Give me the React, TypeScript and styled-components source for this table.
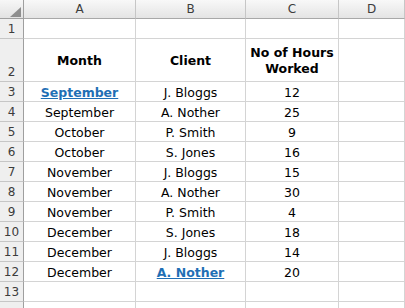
import React from "react";
import styled, { createGlobalStyle } from "styled-components";

const rows = [
	{ month: "September", client: "J. Bloggs", hours: "12", monthLink: true },
	{ month: "September", client: "A. Nother", hours: "25" },
	{ month: "October", client: "P. Smith", hours: "9" },
	{ month: "October", client: "S. Jones", hours: "16" },
	{ month: "November", client: "J. Bloggs", hours: "15" },
	{ month: "November", client: "A. Nother", hours: "30" },
	{ month: "November", client: "P. Smith", hours: "4" },
	{ month: "December", client: "S. Jones", hours: "18" },
	{ month: "December", client: "J. Bloggs", hours: "14" },
	{ month: "December", client: "A. Nother", hours: "20", clientLink: true },
];

const App = () => {
	return (
		<>
			<GlobalStyle />
			<Sheet>
				<Corner>
					<Triangle />
				</Corner>
				{["A", "B", "C", "D"].map((c) => (
					<ColHead key={c}>{c}</ColHead>
				))}

				<RowHead ht={20}>1</RowHead>
				<Cell ht={20} />
				<Cell ht={20} />
				<Cell ht={20} />
				<Cell ht={20} />

				<RowHead ht={43}>2</RowHead>
				<Cell ht={43}>
					<Bold>Month</Bold>
				</Cell>
				<Cell ht={43}>
					<Bold>Client</Bold>
				</Cell>
				<Cell ht={43}>
					<Bold>
						No of Hours
						<br />
						Worked
					</Bold>
				</Cell>
				<Cell ht={43} />

				{rows.map((r, i) => (
					<React.Fragment key={i}>
						<RowHead ht={20}>{i + 3}</RowHead>
						<Cell ht={20}>{r.monthLink ? <Link>{r.month}</Link> : r.month}</Cell>
						<Cell ht={20}>{r.clientLink ? <Link>{r.client}</Link> : r.client}</Cell>
						<Cell ht={20}>{r.hours}</Cell>
						<Cell ht={20} />
					</React.Fragment>
				))}

				<RowHead ht={20}>13</RowHead>
				<Cell ht={20} />
				<Cell ht={20} />
				<Cell ht={20} />
				<Cell ht={20} />

				{/* row 14 only peeks in at the bottom edge */}
				<RowHead ht={20} />
				<Cell ht={20} />
				<Cell ht={20} />
				<Cell ht={20} />
				<Cell ht={20} />
			</Sheet>
		</>
	);
};

export default App;

const GlobalStyle = createGlobalStyle`
	body {
		margin: 0;
		overflow: hidden;
		background: #ffffff;
		font-family: "DejaVu Sans", Verdana, sans-serif;
	}
`;

const Sheet = styled.div`
	display: grid;
	grid-template-columns: 24px 112px 110px 93px 1fr;
	width: 405px;
	height: 308px;
	overflow: hidden;
`;

const Corner = styled.div`
	height: 19px;
	position: relative;
	background: linear-gradient(#f7f7f7, #e2e2e2);
	border-right: 1px solid #9f9f9f;
	border-bottom: 1px solid #9f9f9f;
	box-sizing: border-box;
`;

const Triangle = styled.div`
	position: absolute;
	right: 2px;
	bottom: 1px;
	width: 0;
	height: 0;
	border-left: 11px solid transparent;
	border-bottom: 10px solid #8e8e8e;
`;

const ColHead = styled.div`
	height: 19px;
	box-sizing: border-box;
	background: linear-gradient(#f8f8f8, #e4e4e4);
	border-right: 1px solid #c6c6c6;
	border-bottom: 1px solid #a8a8a8;
	display: flex;
	align-items: center;
	justify-content: center;
	font-size: 12px;
	color: #3c3c3c;
`;

const RowHead = styled.div<{ ht: number }>`
	height: ${(props) => props.ht}px;
	box-sizing: border-box;
	background: #efefef;
	border-right: 1px solid #9f9f9f;
	border-bottom: 1px solid #c6c6c6;
	display: flex;
	align-items: flex-end;
	justify-content: center;
	padding-bottom: 2px;
	font-size: 12px;
	color: #3c3c3c;
`;

const Cell = styled.div<{ ht: number }>`
	height: ${(props) => props.ht}px;
	box-sizing: border-box;
	border-right: 1px solid #d4d4d4;
	border-bottom: 1px solid #d4d4d4;
	display: flex;
	align-items: center;
	justify-content: center;
	text-align: center;
	font-size: 12.5px;
	color: #000;
	white-space: nowrap;
	padding-top: 1px;
`;

const Bold = styled.span`
	font-weight: bold;
	line-height: 16px;
`;

const Link = styled.span`
	font-weight: bold;
	color: #1f6fb5;
	text-decoration: underline;
`;
